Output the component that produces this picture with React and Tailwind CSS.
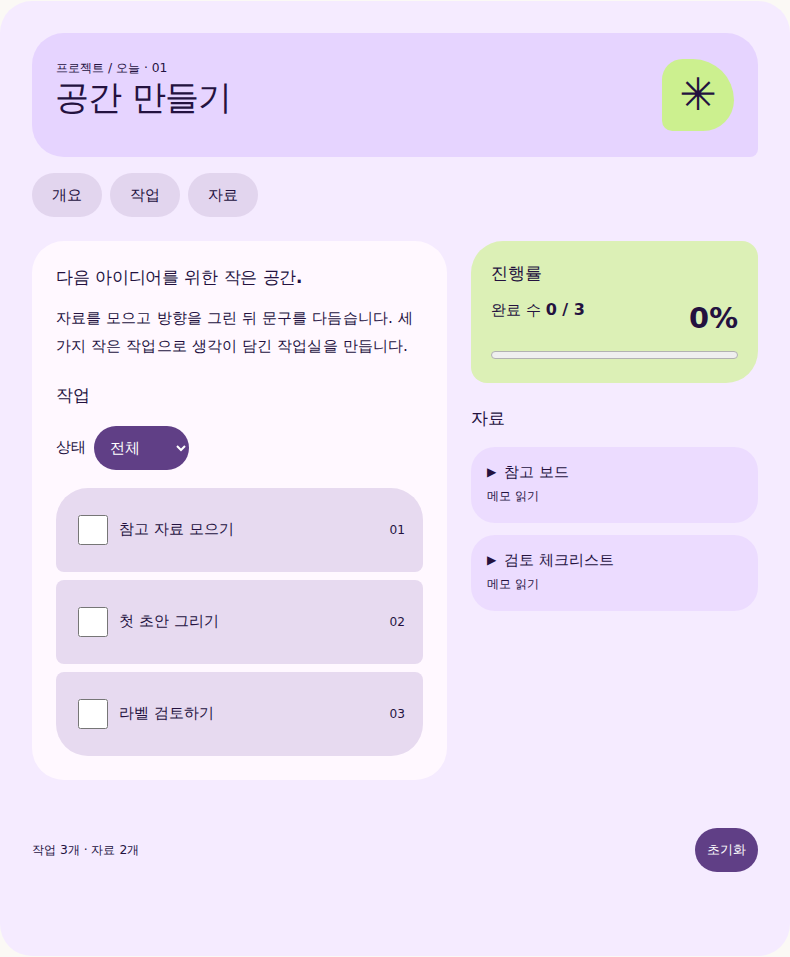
import { useState } from 'react'

const tasks = [
  { id: '01', label: '참고 자료 모으기', shape: 'rounded-t-[32px] rounded-b-lg' },
  { id: '02', label: '첫 초안 그리기', shape: 'rounded-lg' },
  { id: '03', label: '라벨 검토하기', shape: 'rounded-t-lg rounded-b-[32px]' },
]

const resources = ['참고 보드', '검토 체크리스트']

export default function App() {
  const [done, setDone] = useState({})
  const count = Object.values(done).filter(Boolean).length
  const percent = Math.round((count / 3) * 100)

  return (
    <div className="min-h-[957px] bg-[#fbf9f5] py-px font-['DejaVu_Sans',sans-serif] text-[#24123f]">
      <div className="h-[955px] rounded-[32px] bg-[#f5ebff] px-8 pt-8">
        {/* Header */}
        <header className="flex h-[124px] items-start justify-between rounded-t-[32px] rounded-bl-[32px] rounded-br-lg bg-[#e6d4ff] px-6 pt-[26px]">
          <div>
            <p className="text-[12.32px] leading-[18px]">프로젝트 / 오늘 · 01</p>
            <h1 className="-ml-px text-[34px] leading-[40px] font-normal tracking-[-0.02em]">공간 만들기</h1>
          </div>
          <div className="flex h-[72px] w-[72px] items-center justify-center rounded-tl-[24px] rounded-tr-[48px] rounded-br-[36px] rounded-bl-[12px] bg-[#ccf08f] text-[44.8px] leading-none">
            ✳
          </div>
        </header>

        {/* Tabs */}
        <nav className="mt-4 flex gap-2">
          {['개요', '작업', '자료'].map(tab => (
            <button key={tab} className="h-11 w-[70px] rounded-[22px] bg-[#e2d5ee] text-[15.2px]">{tab}</button>
          ))}
        </nav>

        <div className="mt-6 grid grid-cols-[415px_287px] gap-6 items-start">
          {/* Main card */}
          <main className="rounded-[32px] bg-[#fff8ff] px-6 pt-6 pb-6">
            <h2 className="text-[16.8px] leading-6 font-bold tracking-[-0.015em] [font-synthesis:none]">다음 아이디어를 위한 작은 공간.</h2>
            <p className="mt-[15px] text-[15.36px] leading-7 tracking-[0.1px]">자료를 모으고 방향을 그린 뒤 문구를 다듬습니다. 세 가지 작은 작업으로 생각이 담긴 작업실을 만듭니다.</p>
            <h3 className="mt-[23px] text-[16.8px] leading-6 font-normal">작업</h3>

            <div className="mt-[19px] flex items-center gap-2">
              <label className="text-[15.36px]">상태</label>
              <select className="h-11 w-[95px] rounded-[22px] bg-[#603f86] pl-3 text-[15.2px] text-white">
                <option>전체</option>
                <option>완료</option>
              </select>
            </div>

            <ul className="mt-[18px] flex flex-col gap-2">
              {tasks.map(task => (
                <li key={task.id} className={`flex h-[84px] items-center justify-between bg-[#e7daf0] pl-[22px] pr-[18px] ${task.shape}`}>
                  <label className="flex items-center gap-[11px] text-[15.2px]">
                    <input
                      type="checkbox"
                      className="h-[30px] w-[30px]"
                      checked={!!done[task.id]}
                      onChange={e => setDone({ ...done, [task.id]: e.target.checked })}
                    />
                    <span className="pb-[2px]">{task.label}</span>
                  </label>
                  <span className="text-[12.16px]">{task.id}</span>
                </li>
              ))}
            </ul>
          </main>

          {/* Side column */}
          <aside>
            <section className="h-[142px] rounded-tl-[32px] rounded-tr-2xl rounded-br-[32px] rounded-bl-2xl bg-[#dcf0b6] px-5 pt-5">
              <h2 className="text-[16.8px] leading-6 font-normal">진행률</h2>
              <div className="mt-[13px] flex items-start justify-between">
                <p className="text-[15.2px] leading-6">완료 수 <strong className="text-base">{count} / 3</strong></p>
                <strong className="mt-[2px] text-[28.8px] leading-9">{percent}%</strong>
              </div>
              <div className="mt-[15px] h-2 overflow-hidden rounded-full border border-[#b2b2b2] bg-[#efefef]">
                <div className="h-full bg-[#603f86]" style={{ width: `${percent}%` }} />
              </div>
            </section>

            <h2 className="mt-[23px] text-[16.8px] leading-6 font-normal">자료</h2>
            <div className="mt-[17px] flex flex-col gap-3">
              {resources.map(name => (
                <div key={name} className="h-[76px] rounded-3xl bg-[#ecdcff] px-4 pt-[14px]">
                  <p className="flex items-center gap-[7px] text-[15.2px] leading-[22px]">
                    <span className="w-[10px] text-[12.16px]">▶</span>
                    {name}
                  </p>
                  <p className="mt-1 text-[12.32px] leading-[18px]">메모 읽기</p>
                </div>
              ))}
            </div>
          </aside>
        </div>

        {/* Footer */}
        <footer className="mt-12 flex items-center justify-between">
          <span className="text-[12.32px]">작업 3개 · 자료 2개</span>
          <button className="h-11 w-[63px] rounded-[22px] bg-[#603f86] text-[12.8px] text-white">초기화</button>
        </footer>
      </div>
    </div>
  )
}
